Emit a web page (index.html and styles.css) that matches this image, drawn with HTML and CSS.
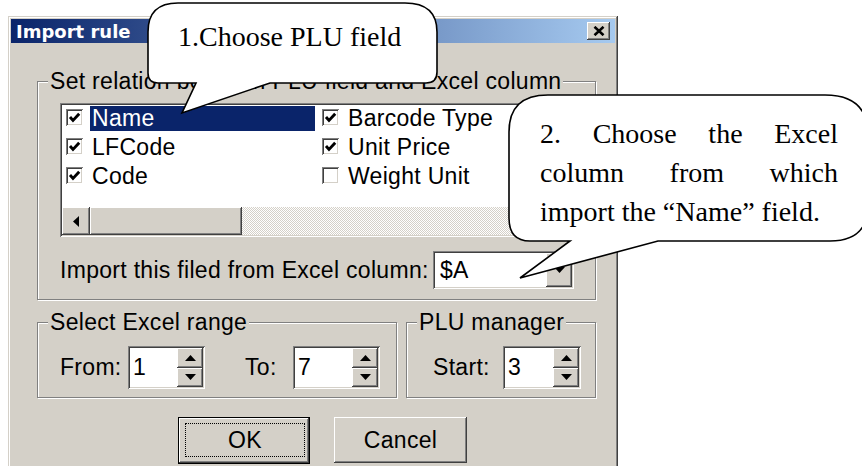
FILE: index.html
```html
<!DOCTYPE html>
<html lang="en">
<head>
  <meta charset="UTF-8">
  <meta name="viewport" content="width=device-width, initial-scale=1.0">
  <title>Import rule</title>
  <link rel="stylesheet" href="styles.css">
</head>
<body>
  <div class="dialog">
    <div class="titlebar">
      <span class="title">Import rule</span>
      <span class="close raised">
        <svg width="12" height="10" viewBox="0 0 12 10"><path d="M1.5 0.8 L10.5 9.2 M10.5 0.8 L1.5 9.2" stroke="#000" stroke-width="2.6"/></svg>
      </span>
    </div>

    <div class="content">
      <fieldset class="group relation">
        <legend>Set relation between PLU field and Excel column</legend>
        <div class="relation-body">
          <div class="listbox">
            <div class="items">
              <div class="item selected">
                <span class="check"><svg viewBox="0 0 13 13" width="13" height="13"><path d="M2 6 L5 9.4 L11.2 2.8" fill="none" stroke="#000" stroke-width="2.9"/></svg></span>
                <span class="label">Name</span>
              </div>
              <div class="item">
                <span class="check"><svg viewBox="0 0 13 13" width="13" height="13"><path d="M2 6 L5 9.4 L11.2 2.8" fill="none" stroke="#000" stroke-width="2.9"/></svg></span>
                <span class="label">LFCode</span>
              </div>
              <div class="item">
                <span class="check"><svg viewBox="0 0 13 13" width="13" height="13"><path d="M2 6 L5 9.4 L11.2 2.8" fill="none" stroke="#000" stroke-width="2.9"/></svg></span>
                <span class="label">Code</span>
              </div>
              <div class="item">
                <span class="check"><svg viewBox="0 0 13 13" width="13" height="13"><path d="M2 6 L5 9.4 L11.2 2.8" fill="none" stroke="#000" stroke-width="2.9"/></svg></span>
                <span class="label">Barcode Type</span>
              </div>
              <div class="item">
                <span class="check"><svg viewBox="0 0 13 13" width="13" height="13"><path d="M2 6 L5 9.4 L11.2 2.8" fill="none" stroke="#000" stroke-width="2.9"/></svg></span>
                <span class="label">Unit Price</span>
              </div>
              <div class="item">
                <span class="check"></span>
                <span class="label">Weight Unit</span>
              </div>
            </div>
            <div class="hscroll">
              <span class="scroll-btn raised">
                <svg width="6" height="11" viewBox="0 0 6 11"><polygon points="6,0 0,5.5 6,11" fill="#000"/></svg>
              </span>
              <span class="thumb raised"></span>
              <span class="track"></span>
            </div>
          </div>

          <div class="import-row">
            <span>Import this filed from Excel column:</span>
            <div class="combo sunken">
              <span class="combo-text">$A</span>
              <span class="drop raised">
                <svg width="11" height="6" viewBox="0 0 11 6"><polygon points="0,0 11,0 5.5,6" fill="#000"/></svg>
              </span>
            </div>
          </div>
        </div>
      </fieldset>

      <div class="lower-groups">
        <fieldset class="group range">
          <legend>Select Excel range</legend>
          <div class="spin-row">
            <span class="field-label from-label">From:</span>
            <div class="spin sunken spin-from">
              <span class="spin-value">1</span>
              <span class="spin-btns">
                <span class="spin-btn raised"><svg width="11" height="6" viewBox="0 0 11 6"><polygon points="0,6 5.5,0 11,6" fill="#000"/></svg></span>
                <span class="spin-btn raised"><svg width="11" height="6" viewBox="0 0 11 6"><polygon points="0,0 11,0 5.5,6" fill="#000"/></svg></span>
              </span>
            </div>
            <span class="field-label to-label">To:</span>
            <div class="spin sunken spin-to">
              <span class="spin-value">7</span>
              <span class="spin-btns">
                <span class="spin-btn raised"><svg width="11" height="6" viewBox="0 0 11 6"><polygon points="0,6 5.5,0 11,6" fill="#000"/></svg></span>
                <span class="spin-btn raised"><svg width="11" height="6" viewBox="0 0 11 6"><polygon points="0,0 11,0 5.5,6" fill="#000"/></svg></span>
              </span>
            </div>
          </div>
        </fieldset>

        <fieldset class="group plu">
          <legend>PLU manager</legend>
          <div class="spin-row plu-row">
            <span class="field-label start-label">Start:</span>
            <div class="spin sunken spin-start">
              <span class="spin-value">3</span>
              <span class="spin-btns">
                <span class="spin-btn raised"><svg width="11" height="6" viewBox="0 0 11 6"><polygon points="0,6 5.5,0 11,6" fill="#000"/></svg></span>
                <span class="spin-btn raised"><svg width="11" height="6" viewBox="0 0 11 6"><polygon points="0,0 11,0 5.5,6" fill="#000"/></svg></span>
              </span>
            </div>
          </div>
        </fieldset>
      </div>

      <div class="buttons">
        <button class="btn btn-default"><span class="focus">OK</span></button>
        <button class="btn btn-cancel">Cancel</button>
      </div>
    </div>
  </div>

  <!-- callouts drawn over the dialog -->
  <div class="callout callout-plu">
    <svg class="bubble" width="294" height="116" viewBox="0 0 294 116">
      <path d="M32 2 H259 Q291 2 291 31 V71 Q291 82 280 82 H124 L36 112 L50 82 H12 Q2 82 2 72 V31 Q2 2 32 2 Z" fill="#fff" stroke="#000" stroke-width="1.6"/>
    </svg>
    <div class="callout-text">1.Choose PLU field</div>
  </div>

  <div class="callout callout-column">
    <svg class="bubble" width="355" height="188" viewBox="0 0 355 188">
      <path d="M41 2 H318 Q361 2 361 42 V112 Q361 148 323 148 H151 L13 185 L63 148 H23 Q2 148 2 125 V39 Q2 2 41 2 Z" fill="#fff" stroke="#000" stroke-width="1.6"/>
    </svg>
    <div class="callout-text">
      <div class="justified">2. Choose the Excel</div>
      <div class="justified">column from which</div>
      <div>import the “Name” field.</div>
    </div>
  </div>
</body>
</html>
```

FILE: styles.css
```css
body {
  margin: 0;
  position: relative;
  width: 862px;
  height: 466px;
  overflow: hidden;
  background: #fff;
  font-family: "Liberation Sans", Arial, sans-serif;
  font-size: 23px;
  letter-spacing: 0.3px;
  color: #000;
}

/* shared 3d edges */
.raised {
  background: #d4d0c8;
  box-shadow: inset -1px -1px #404040, inset 1px 1px #fff, inset -2px -2px #808080;
}
.sunken {
  background: #fff;
  box-shadow: inset 1px 1px #808080, inset -1px -1px #fff, inset 2px 2px #404040, inset -2px -2px #d4d0c8;
}

.dialog {
  margin: 16px 0 0 8px;
  width: 610px;
  height: 470px;
  box-sizing: border-box;
  padding: 3px;
  background: #d4d0c8;
  box-shadow: inset -1px -1px #404040, inset 1px 1px #d4d0c8, inset -2px -2px #808080, inset 2px 2px #fff;
}

.titlebar {
  height: 24px;
  display: flex;
  align-items: center;
  justify-content: space-between;
  padding: 0 5px;
  background: linear-gradient(to right, #0a246a, #a6caf0);
}
.title {
  font-family: "DejaVu Sans", sans-serif;
  font-weight: bold;
  font-size: 18px;
  letter-spacing: 0;
  color: #fff;
}
.close {
  width: 23px;
  height: 18px;
  display: flex;
  align-items: center;
  justify-content: center;
}

.content {
  padding: 27px 19px 0 26px;
}

.group {
  margin: 0;
  padding: 0;
  min-width: 0;
  border: 1px solid #808080;
  box-shadow: 1px 1px #fff, inset 1px 1px #fff;
}
.group legend {
  margin-left: 10px;
  padding: 0 2px;
  line-height: 22px;
  background: #d4d0c8;
}

.relation-body {
  padding: 11px 0 10px 22px;
}

.listbox {
  width: 513px;
  height: 134px;
  box-sizing: border-box;
  padding: 2px;
  display: flex;
  flex-direction: column;
  background: #fff;
  box-shadow: inset 1px 1px #808080, inset -1px -1px #fff, inset 2px 2px #404040, inset -2px -2px #d4d0c8;
}
.items {
  flex: 1;
  display: grid;
  grid-template-columns: 256px 256px;
  grid-template-rows: repeat(3, 29px);
  grid-auto-flow: column;
  align-content: start;
}
.item {
  display: flex;
  align-items: flex-start;
}
.check {
  width: 17px;
  height: 17px;
  box-sizing: border-box;
  margin: 4px 0 0 4px;
  padding: 2px;
  display: flex;
  background: #fff;
  box-shadow: inset 1px 1px #808080, inset -1px -1px #fff, inset 2px 2px #404040, inset -2px -2px #d4d0c8;
}
.label {
  margin: 1px 0 0 7px;
  padding: 0 2px;
  line-height: 25px;
  white-space: nowrap;
}
.selected .label {
  flex: 1;
  margin-right: 3px;
  background: #0a246a;
  color: #fff;
}

.hscroll {
  height: 28px;
  display: flex;
}
.scroll-btn {
  width: 28px;
  display: flex;
  align-items: center;
  justify-content: center;
}
.thumb {
  width: 152px;
}
.track {
  flex: 1;
  background: repeating-conic-gradient(#d4d0c8 0 25%, #fff 0 50%) 0 0 / 2px 2px;
}

.import-row {
  width: 514px;
  margin-top: 14px;
  display: flex;
  align-items: center;
  justify-content: space-between;
}
.combo {
  width: 141px;
  height: 38px;
  box-sizing: border-box;
  padding: 2px;
  display: flex;
}
.combo-text {
  flex: 1;
  display: flex;
  align-items: center;
  padding-left: 5px;
}
.drop {
  width: 26px;
  display: flex;
  align-items: center;
  justify-content: center;
}

.lower-groups {
  margin-top: 11px;
  display: flex;
  gap: 9px;
}
.range {
  width: 360px;
  box-sizing: border-box;
}
.plu {
  width: 190px;
  box-sizing: border-box;
}
.spin-row {
  display: flex;
  align-items: center;
  padding: 13px 0 8px 22px;
}
.plu-row {
  padding-left: 26px;
}
.field-label {
  white-space: nowrap;
}
.from-label { width: 68px; }
.to-label { width: 48px; margin-left: 40px; }
.start-label { width: 70px; }

.spin {
  height: 43px;
  box-sizing: border-box;
  padding: 2px;
  display: flex;
}
.spin-from { width: 77px; }
.spin-to { width: 87px; }
.spin-start { width: 78px; }
.spin-value {
  flex: 1;
  display: flex;
  align-items: center;
  padding-left: 3px;
}
.spin-btns {
  width: 26px;
  display: flex;
  flex-direction: column;
}
.spin-btn {
  flex: 1;
  display: flex;
  align-items: center;
  justify-content: center;
}

.buttons {
  margin: 19px 0 0 141px;
  display: flex;
  gap: 24px;
}
.btn {
  font: inherit;
  letter-spacing: inherit;
  color: #000;
  border: none;
  background: #d4d0c8;
  box-sizing: border-box;
}
.btn-default {
  width: 132px;
  height: 47px;
  padding: 6px 5px 7px 7px;
  display: flex;
  box-shadow: inset 0 0 0 1px #000, inset -2px -2px #404040, inset 2px 2px #fff, inset -3px -3px #808080;
}
.btn-default .focus {
  flex: 1;
  display: flex;
  align-items: center;
  justify-content: center;
  border: 1px dotted #000;
}
.btn-cancel {
  width: 133px;
  height: 46px;
  padding: 0;
  box-shadow: inset -1px -1px #404040, inset 1px 1px #fff, inset -2px -2px #808080;
}

/* speech bubbles */
.callout {
  position: absolute;
  box-sizing: border-box;
  font-family: "Liberation Serif", "Times New Roman", serif;
  font-size: 28px;
  letter-spacing: 0;
}
.bubble {
  position: absolute;
  left: 0;
  top: 0;
}
.callout-text {
  position: relative;
}
.callout-plu {
  left: 146px;
  top: 1px;
  width: 294px;
  height: 116px;
  padding: 22px 0 0 32px;
  line-height: 28px;
}
.callout-column {
  left: 507px;
  top: 93px;
  width: 355px;
  height: 188px;
  padding: 21px 0 0 33px;
  line-height: 39px;
}
.callout-column .callout-text {
  width: 298px;
}
.justified {
  text-align: justify;
  text-align-last: justify;
}
```
